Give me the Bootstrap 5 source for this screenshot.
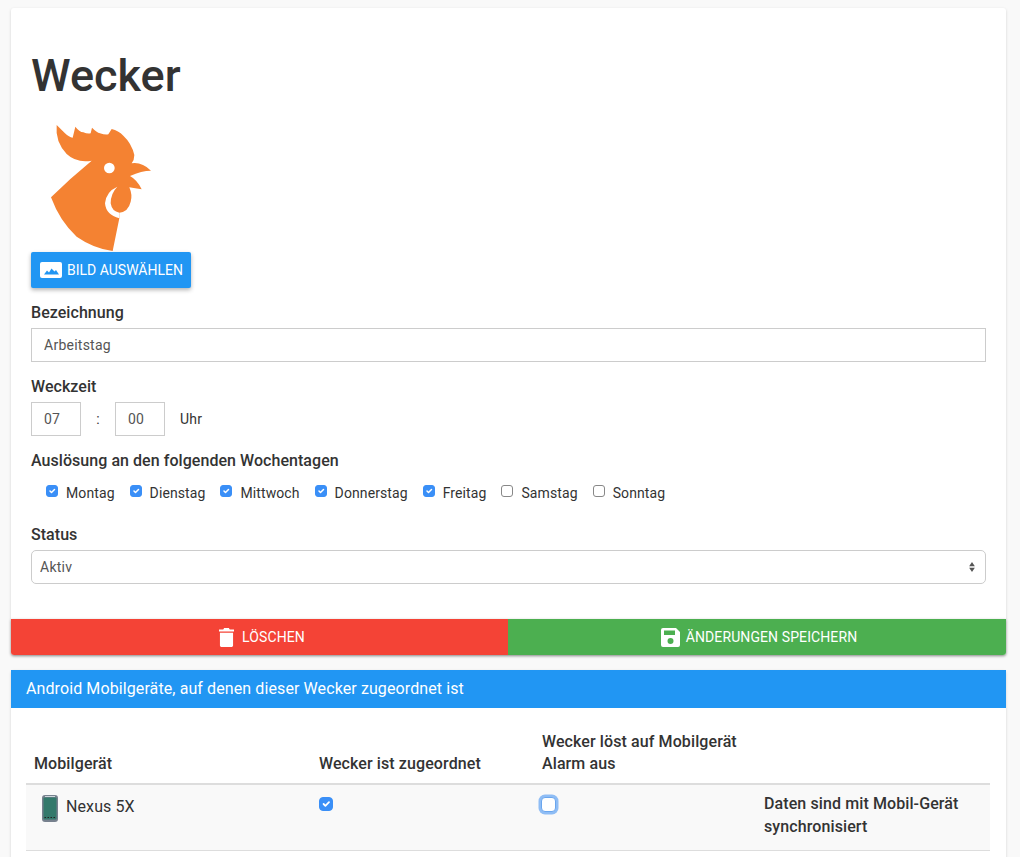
<!DOCTYPE html>
<html lang="de">
<head>
<meta charset="utf-8">
<title>Wecker</title>
<link href="https://cdn.jsdelivr.net/npm/bootstrap@5.3.0/dist/css/bootstrap.min.css" rel="stylesheet">
<style>
html,body{height:857px;overflow:hidden}
body{background:#f9f9f9;font-family:Roboto,"Liberation Sans",sans-serif;font-size:14px;color:#333;padding:8px 14px 0 11px}
.sheet{border:0;border-radius:3px;background:#fff;box-shadow:0 1px 3px rgba(0,0,0,.16)}
.sheet-body{padding:20px 20px 35px}
.page-title{font-size:45px;font-weight:500;line-height:54px;margin:21px 0 22px;color:#333}
.rooster{display:block;width:125px;height:126px;margin-bottom:1px}
.pick-btn{display:inline-flex;align-items:center;gap:5px;background:#2196f3;color:#fff;border:0;border-radius:2px;height:36px;width:160px;padding:0 0 0 9px;font-size:14px;font-weight:400;box-shadow:0 2px 4px rgba(0,0,0,.3);white-space:nowrap}
.pick-btn:hover{background:#2196f3;color:#fff}
.fld-label{display:block;font-size:16px;font-weight:500;line-height:20px;margin:15px 0 5px;color:#333;letter-spacing:.05px}
.txt-input{height:34px;border:1px solid #ccc;border-radius:0;padding:0 12px;font-size:14px;color:#555;font-weight:400;letter-spacing:.25px}
.time-input{width:50px;text-align:left}
.time-sep{width:34px;text-align:center;font-weight:400}
.time-unit{margin-left:15px;font-weight:400;color:#333;letter-spacing:.2px}
.day-title{margin-top:15px;margin-bottom:12px}
.day-row{padding-left:15px;gap:15px;line-height:20px;height:20px}
.status-title{margin-top:22px}
.day-check{display:flex;align-items:center;gap:8px;font-weight:400;color:#333;letter-spacing:.1px;margin:0;padding:0;min-height:0}
.day-check .form-check-input{width:12px;height:12px;margin:-4px 0 0;float:none;border-radius:3px;border-color:#888}
.form-check-input:checked{background-color:#3a8ff7;border-color:#3a8ff7}
.state-select{height:34px;border:1px solid #ccc;border-radius:5px;padding:0 8px;font-size:14px;color:#555;font-weight:400;letter-spacing:.25px;background-position:right 8px center;background-size:10px 10px;background-image:url("data:image/svg+xml,%3csvg xmlns='http://www.w3.org/2000/svg' viewBox='0 0 10 14'%3e%3cpath fill='%23555' d='M5 0l4 6H1zM5 14L1 8h8z'/%3e%3c/svg%3e")}
.act-btn{display:flex;align-items:center;justify-content:center;height:36px;border:0;border-radius:0;color:#fff;font-size:14px;font-weight:400;letter-spacing:.1px}
.act-btn:hover{color:#fff}
.act-red,.act-red:hover{background:#f44336;flex:0 0 497px;gap:8px;padding:0 0 0 5px}
.act-green,.act-green:hover{background:#4caf50;flex:1 1 0;gap:6px;padding:0 0 0 4px}
.act-row{box-shadow:0 1px 3px rgba(0,0,0,.35);border-radius:0 0 3px 3px;overflow:hidden}
.dev-card{margin-top:15px}
.dev-head{background:#2196f3;color:#fff;height:38px;padding:0 15px;font-weight:400;font-size:16px;line-height:38px;letter-spacing:.1px}
.dev-wrap{padding:15px 16px 40px 15px}
.dev-table{margin:0;color:#333;table-layout:fixed;width:964px}
.cw1{width:285px}
.cw2{width:223px}
.cw3{width:222px}
.cw4{width:234px}
.dev-table th{font-size:16px;font-weight:500;line-height:22px;padding:8px 8px 8px;border-bottom:2px solid #ddd;vertical-align:bottom;background:#fff;color:#333;letter-spacing:.1px}
.dev-table td{font-size:16px;font-weight:500;line-height:23px;padding:7px 8px 5px;background:#f9f9f9;border-bottom:1px solid #ddd;vertical-align:top;height:66px;color:#333;letter-spacing:.1px}
.dev-name{display:flex;align-items:flex-start;gap:8px;padding:3px 0 0 8px;font-weight:400}
.dev-name svg{flex:none}
.tbl-check{display:block;margin:5px 0 0;width:14px;height:14px;float:none;border-radius:3px}
.tbl-focus{width:15px;height:15px;margin-left:-1px;border-color:#6aa6ee;box-shadow:0 0 0 2.5px #8fbdf5;border-radius:4px}
</style>
</head>
<body>
<div class="card sheet">
  <div class="sheet-body">
    <h1 class="page-title">Wecker</h1>
    <svg class="rooster" viewBox="93 75 375 378" aria-hidden="true">
      <path fill="#f48232" d="M170 75L195 100Q207 112 218 113L226 80Q238 96 250 97Q262 102 272 100L276 83Q290 97 300 100Q315 105 325 103L335 87Q355 92 370 107Q395 130 403 165Q403 180 395 190Q425 185 453 212Q425 212 390 228Q412 240 425 268Q405 265 388 262Q398 285 392 305Q385 335 358 338L358 355L338 453Q280 445 230 410Q180 365 153 292Q210 235 275 182Q230 190 200 162Q165 125 170 75Z"/>
      <circle cx="328" cy="204" r="16" fill="#fff"/>
      <path fill="#fff" d="M352 260Q318 275 315 310Q318 345 358 355L358 338Q336 335 332 310Q332 280 352 260Z"/>
    </svg>
    <button type="button" class="btn pick-btn">
      <svg width="22" height="16" viewBox="0 0 22 16" aria-hidden="true"><rect width="22" height="16" rx="2" fill="#fff"/><path fill="#2196f3" d="M4 12.500l3-4 2 2 2.500-4 3 3 1.500-1.500 3 4.500z"/></svg>
      BILD AUSWÄHLEN
    </button>
    <label class="fld-label" for="bez">Bezeichnung</label>
    <input id="bez" class="form-control txt-input" value="Arbeitstag">
    <label class="fld-label">Weckzeit</label>
    <div class="d-flex align-items-center">
      <input class="form-control txt-input time-input" value="07">
      <span class="time-sep">:</span>
      <input class="form-control txt-input time-input" value="00">
      <span class="time-unit">Uhr</span>
    </div>
    <label class="fld-label day-title">Auslösung an den folgenden Wochentagen</label>
    <div class="d-flex day-row">
      <label class="form-check day-check"><input class="form-check-input" type="checkbox" checked>Montag</label>
      <label class="form-check day-check"><input class="form-check-input" type="checkbox" checked>Dienstag</label>
      <label class="form-check day-check"><input class="form-check-input" type="checkbox" checked>Mittwoch</label>
      <label class="form-check day-check"><input class="form-check-input" type="checkbox" checked>Donnerstag</label>
      <label class="form-check day-check"><input class="form-check-input" type="checkbox" checked>Freitag</label>
      <label class="form-check day-check"><input class="form-check-input" type="checkbox">Samstag</label>
      <label class="form-check day-check"><input class="form-check-input" type="checkbox">Sonntag</label>
    </div>
    <label class="fld-label status-title">Status</label>
    <select class="form-select state-select"><option>Aktiv</option></select>
  </div>
  <div class="d-flex act-row">
    <button type="button" class="btn act-btn act-red">
      <svg width="15" height="19" viewBox="0 0 16 20" preserveAspectRatio="none" aria-hidden="true"><path fill="#fff" d="M5.500 0h5l1 1.500H16v2.200H0V1.500h4.500zM1 5h14v13.500a1.500 1.500 0 0 1-1.500 1.500h-11A1.500 1.500 0 0 1 1 18.500z"/></svg>
      LÖSCHEN
    </button>
    <button type="button" class="btn act-btn act-green">
      <svg width="19" height="19" viewBox="0 0 19 19" aria-hidden="true"><path fill="#fff" fill-rule="evenodd" d="M2 0h13l4 4v13a2 2 0 0 1-2 2H2a2 2 0 0 1-2-2V2a2 2 0 0 1 2-2zm1 2.500v4.500h11V2.500zM9.500 10a3 3 0 1 0 0 6 3 3 0 0 0 0-6z"/></svg>
      ÄNDERUNGEN SPEICHERN
    </button>
  </div>
</div>
<div class="card sheet dev-card">
  <div class="dev-head">Android Mobilgeräte, auf denen dieser Wecker zugeordnet ist</div>
  <div class="dev-wrap">
    <table class="table dev-table">
      <colgroup><col class="cw1"><col class="cw2"><col class="cw3"><col class="cw4"></colgroup>
      <thead>
        <tr><th>Mobilgerät</th><th>Wecker ist zugeordnet</th><th>Wecker löst auf Mobilgerät Alarm aus</th><th></th></tr>
      </thead>
      <tbody>
        <tr>
          <td>
            <div class="dev-name">
              <svg width="16" height="27" viewBox="0 0 16 27" aria-hidden="true"><rect width="16" height="27" rx="3" fill="#77818e"/><rect x="1.500" y="2.500" width="13" height="22" rx="1" fill="#33796b"/><rect x="3" y="1" width="10" height="1" fill="#cfd6dc"/><path stroke="#222" stroke-width="1" stroke-dasharray="1.500 1.500" d="M2.500 22.500h11"/></svg>
              Nexus 5X
            </div>
          </td>
          <td><input class="form-check-input tbl-check" type="checkbox" checked></td>
          <td><input class="form-check-input tbl-check tbl-focus" type="checkbox"></td>
          <td>Daten sind mit Mobil-Gerät synchronisiert</td>
        </tr>
      </tbody>
    </table>
  </div>
</div>
</body>
</html>
